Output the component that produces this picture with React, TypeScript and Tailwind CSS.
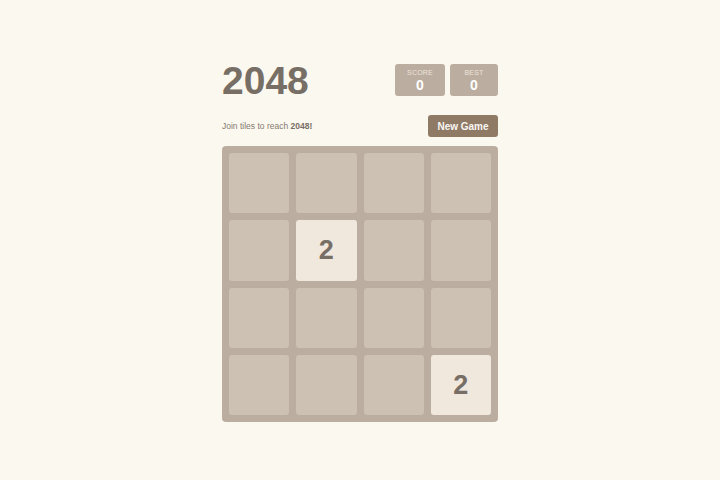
import { useState } from "react";

type Board = number[];

const initialBoard: Board = [0, 0, 0, 0, 0, 2, 0, 0, 0, 0, 0, 0, 0, 0, 0, 2];

export default function App() {
  const [board] = useState<Board>(initialBoard);
  const [score] = useState(0);
  const [best] = useState(0);

  return (
    <div className="min-h-screen bg-[#fbf8ef] pt-[60px] font-['Liberation_Sans',Arial,sans-serif]">
      <div className="mx-auto w-[276px]">
        {/* Header */}
        <div className="flex h-[40px] items-center justify-between">
          <h1 className="text-[39px] font-bold leading-none text-[#776e65]">2048</h1>
          <div className="flex gap-[5px]">
            <div className="flex h-[32px] w-[50px] flex-col items-center justify-center rounded-[3px] bg-[#bbada0]">
              <span className="text-[7px] uppercase leading-none tracking-wide text-[#eee4da]">Score</span>
              <span className="mt-[2px] text-[14px] font-bold leading-none text-white">{score}</span>
            </div>
            <div className="flex h-[32px] w-[48px] flex-col items-center justify-center rounded-[3px] bg-[#bbada0]">
              <span className="text-[7px] uppercase leading-none tracking-wide text-[#eee4da]">Best</span>
              <span className="mt-[2px] text-[14px] font-bold leading-none text-white">{best}</span>
            </div>
          </div>
        </div>

        {/* Intro row */}
        <div className="mt-[15px] flex h-[22px] items-center justify-between">
          <p className="text-[8.5px] text-[#857b72]">
            Join tiles to reach <strong className="text-[#776e65]">2048!</strong>
          </p>
          <button className="h-[22px] w-[70px] rounded-[3px] bg-[#8f7a66] text-[10px] font-bold text-[#f9f6f2]">
            New Game
          </button>
        </div>

        {/* Board */}
        <div className="mt-[9px] grid h-[276px] grid-cols-4 grid-rows-4 gap-[7px] rounded-[4px] bg-[#bbada0] p-[7px]">
          {board.map((v, i) =>
            v ? (
              <div
                key={i}
                className="flex items-center justify-center rounded-[3px] bg-[#f0e7dd] text-[27px] font-bold text-[#776e65]"
              >
                {v}
              </div>
            ) : (
              <div key={i} className="rounded-[3px] bg-[#cdc1b4]" />
            )
          )}
        </div>
      </div>
    </div>
  );
}
